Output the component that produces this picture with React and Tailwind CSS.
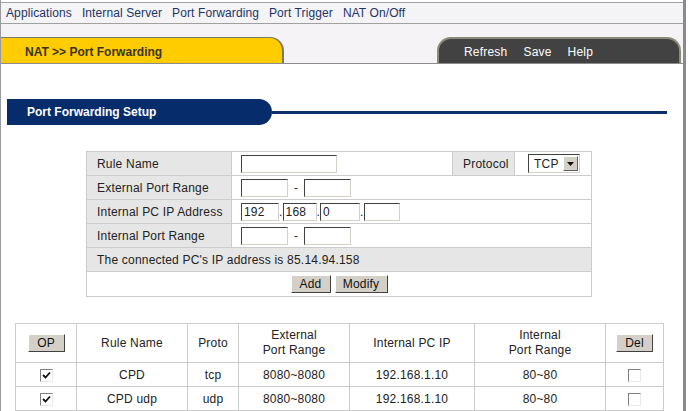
import React from 'react';

const font = { fontFamily: '"Liberation Sans", Arial, sans-serif' };

function TextBox({ w, value = '' }) {
  return (
    <span
      className={`inline-flex items-center h-[18px] bg-white border-t border-l border-t-[#404040] border-l-[#404040] border-b border-r border-b-[#d4d0c8] border-r-[#d4d0c8] pl-[2px] text-[12px] text-[#222] leading-none align-middle ${w}`}
    >
      {value}
    </span>
  );
}

function Btn({ children, w }) {
  return (
    <span className={`inline-flex items-center justify-center h-[18px] bg-[#d4d0c8] border-t border-l border-white border-b border-r border-b-[#404040] border-r-[#404040] text-[12px] text-[#111] leading-none ${w}`}>
      {children}
    </span>
  );
}

function Check({ on }) {
  return (
    <span className="inline-flex items-center justify-center w-[13px] h-[13px] bg-white border-t border-l border-[#808080] border-b border-r border-b-[#e8e8e8] border-r-[#e8e8e8] align-middle">
      {on && (
        <svg width="9" height="9" viewBox="0 0 9 9">
          <path d="M1 4 L3.5 6.5 L8 1.5" stroke="#111" strokeWidth="1.8" fill="none" />
        </svg>
      )}
    </span>
  );
}

const rows = [
  { name: 'CPD', proto: 'tcp' },
  { name: 'CPD udp', proto: 'udp' },
];

export default function App() {
  const label = 'bg-[#e6e6e6] border border-[#cccccc] pl-[10px] text-[12px] text-[#222] tracking-[0.2px]';
  const cell = 'border border-[#cccccc] text-[12px] text-[#222] tracking-[0.2px]';
  return (
    <div style={font} className="w-[688px] h-[411px] overflow-hidden bg-white">
      <div className="w-[686px] h-[411px] border-l border-[#9a9a9a] border-r-[3px] border-r-[#8a8a8a] flex flex-col">
        {/* top menu */}
        <div className="h-[22px] mt-[2px] bg-[#f4f4f6] border-t border-b border-[#a0a0a0] flex items-center gap-[10px] pl-[5px] text-[12px] text-[#1d3366] tracking-[0.1px]">
          <span>Applications</span>
          <span>Internal Server</span>
          <span>Port Forwarding</span>
          <span>Port Trigger</span>
          <span>NAT On/Off</span>
        </div>

        {/* tabs */}
        <div className="h-[41px] bg-[#f6f3f6] border-b border-[#8c8c8c] flex items-end justify-between pr-[2px]">
          <div className="w-[283px] h-[26px] bg-[#ffcc00] rounded-tr-[14px] border-t border-r-2 border-[#7a7a6a] flex items-center pt-[3px] pl-[24px] text-[12px] font-bold text-[#3a3320]">
            NAT &gt;&gt; Port Forwarding
          </div>
          <div className="w-[244px] h-[26px] bg-[#424242] rounded-t-[14px] border-t-2 border-l-2 border-r-2 border-[#8a8a7a] flex items-center pt-[2px] gap-[16px] pl-[25px] text-[12px] text-white tracking-[0.2px]">
            <span>Refresh</span>
            <span>Save</span>
            <span>Help</span>
          </div>
        </div>

        {/* section heading */}
        <div className="mt-[35px] flex items-center pl-[6px] pr-[16px]">
          <div className="w-[265px] h-[26px] bg-[#062c6b] rounded-r-[13px] flex items-center pl-[20px] text-[12px] font-bold text-white">
            Port Forwarding Setup
          </div>
          <div className="flex-1 h-[3px] bg-[#0a2f6c]" />
        </div>

        {/* setup form */}
        <div className="mt-[26px] pl-[85px]">
          <table className="border-collapse w-[506px]">
            <tbody>
              <tr className="h-[24px]">
                <td className={`${label} w-[145px]`}>Rule Name</td>
                <td className={`${cell} pl-[9px] w-[221px]`}><TextBox w="w-[96px]" /></td>
                <td className={`${label} w-[62px] pl-[9px]`}>Protocol</td>
                <td className={`${cell} pl-[13px]`}>
                  <span className="inline-flex items-center w-[52px] h-[19px] bg-white border-t border-l border-[#404040] border-b border-r border-b-[#d4d0c8] border-r-[#d4d0c8] align-middle">
                    <span className="flex-1 pl-[5px] text-[12px] leading-none">TCP</span>
                    <span className="w-[15px] h-[15px] mr-[1px] bg-[#d4d0c8] border-t border-l border-white border-b border-r border-b-[#606060] border-r-[#606060] flex items-center justify-center">
                      <svg width="7" height="4" viewBox="0 0 7 4"><path d="M0 0 H7 L3.5 4 Z" fill="#111" /></svg>
                    </span>
                  </span>
                </td>
              </tr>
              <tr className="h-[24px]">
                <td className={label}>External Port Range</td>
                <td className={`${cell} pl-[9px]`} colSpan={3}>
                  <TextBox w="w-[47px]" /><span className="mx-[6px] align-middle">-</span><TextBox w="w-[47px]" />
                </td>
              </tr>
              <tr className="h-[24px]">
                <td className={label}>Internal PC IP Address</td>
                <td className={`${cell} pl-[9px]`} colSpan={3}>
                  <TextBox w="w-[38px]" value="192" /><span className="align-middle">.</span>
                  <TextBox w="w-[34px]" value="168" /><span className="align-middle">.</span>
                  <TextBox w="w-[40px]" value="0" /><span className="align-middle">.</span>
                  <TextBox w="w-[36px]" />
                </td>
              </tr>
              <tr className="h-[24px]">
                <td className={label}>Internal Port Range</td>
                <td className={`${cell} pl-[9px]`} colSpan={3}>
                  <TextBox w="w-[47px]" /><span className="mx-[6px] align-middle">-</span><TextBox w="w-[47px]" />
                </td>
              </tr>
              <tr className="h-[24px]">
                <td className={label} colSpan={4}>The connected PC's IP address is 85.14.94.158</td>
              </tr>
              <tr className="h-[25px]">
                <td className={cell} colSpan={4}>
                  <div className="flex justify-center gap-[4px]">
                    <Btn w="w-[40px]">Add</Btn>
                    <Btn w="w-[53px]">Modify</Btn>
                  </div>
                </td>
              </tr>
            </tbody>
          </table>
        </div>

        {/* rules list */}
        <div className="mt-[26px] pl-[14px]">
          <table className="border-collapse w-[649px] text-center">
            <tbody>
              <tr className="h-[39px]">
                <td className={`${cell} w-[61px]`}><Btn w="w-[37px]">OP</Btn></td>
                <td className={`${cell} w-[111px]`}>Rule Name</td>
                <td className={`${cell} w-[51px]`}>Proto</td>
                <td className={`${cell} w-[111px] leading-[15px]`}>External<br />Port Range</td>
                <td className={`${cell} w-[125px]`}>Internal PC IP</td>
                <td className={`${cell} w-[131px] leading-[15px]`}>Internal<br />Port Range</td>
                <td className={cell}><Btn w="w-[37px]">Del</Btn></td>
              </tr>
              {rows.map((r) => (
                <tr key={r.name} className="h-[24px]">
                  <td className={cell}><Check on /></td>
                  <td className={`${cell} text-[#1d3d7a]`}>{r.name}</td>
                  <td className={cell}>{r.proto}</td>
                  <td className={cell}>8080~8080</td>
                  <td className={cell}>192.168.1.10</td>
                  <td className={cell}>80~80</td>
                  <td className={cell}><Check /></td>
                </tr>
              ))}
            </tbody>
          </table>
        </div>
      </div>
    </div>
  );
}
